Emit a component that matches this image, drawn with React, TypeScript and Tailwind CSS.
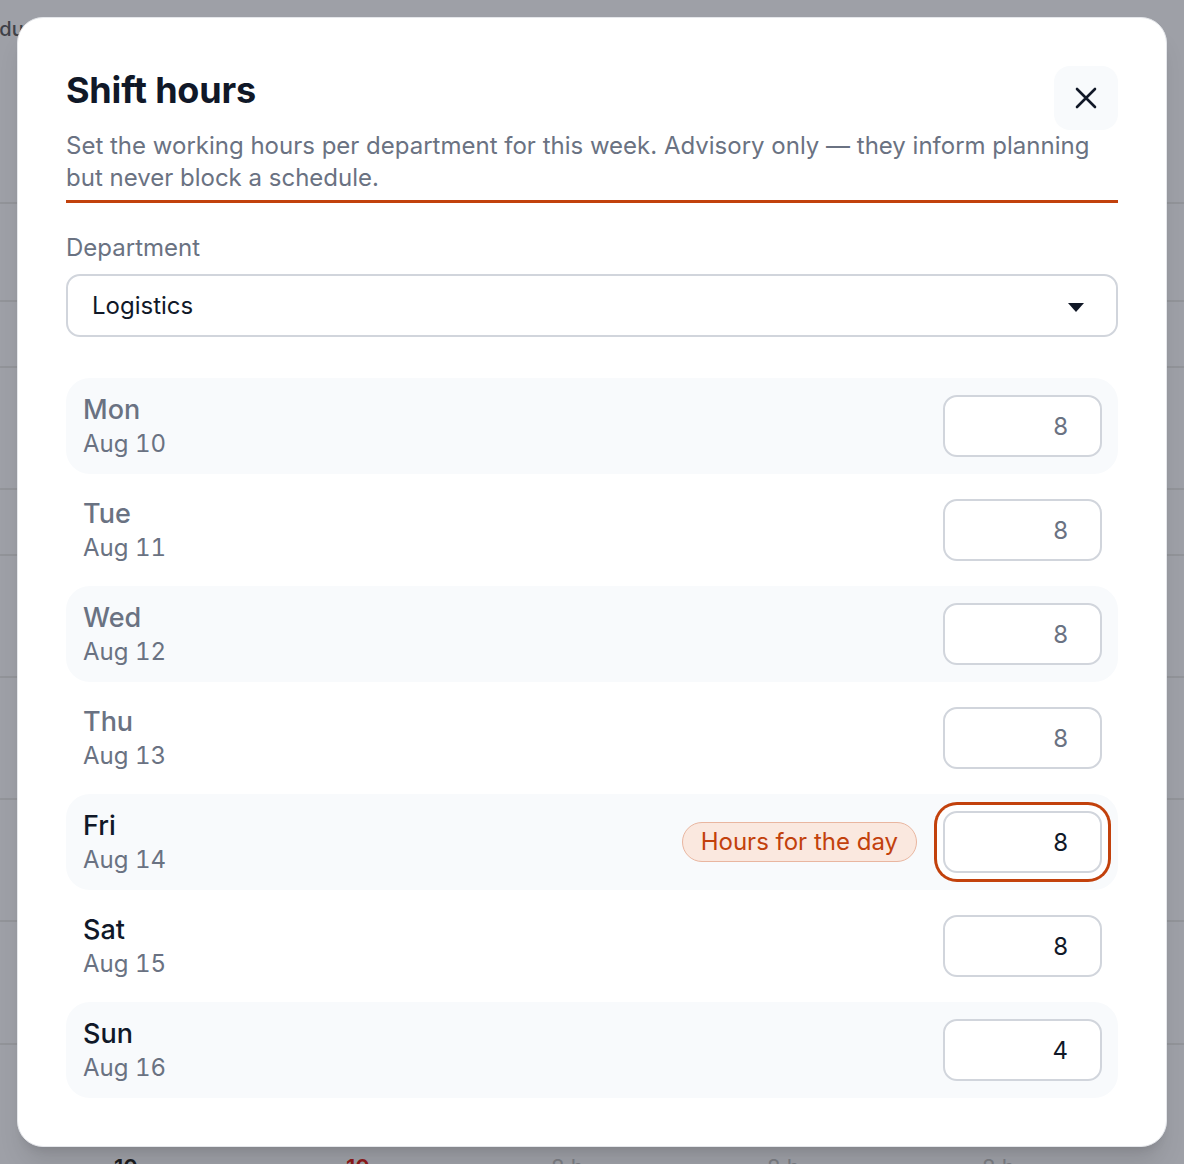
import { useState } from "react";

interface DayRow {
  day: string;
  date: string;
  hours: string;
  past: boolean;
}

const DAYS: DayRow[] = [
  { day: "Mon", date: "Aug 10", hours: "8", past: true },
  { day: "Tue", date: "Aug 11", hours: "8", past: true },
  { day: "Wed", date: "Aug 12", hours: "8", past: true },
  { day: "Thu", date: "Aug 13", hours: "8", past: true },
  { day: "Fri", date: "Aug 14", hours: "8", past: false },
  { day: "Sat", date: "Aug 15", hours: "8", past: false },
  { day: "Sun", date: "Aug 16", hours: "4", past: false },
];

// the dimmed table behind the overlay
function Backdrop() {
  return (
    <div className="absolute inset-0 flex flex-col bg-[#9ea0a7]">
      <div className="h-[204px] shrink-0 border-b-2 border-[#929499] pt-[14px]">
        <span className="ml-[-33px] text-[20px] font-medium text-[#3f4147]">Product</span>
      </div>
      <div className="h-[98px] shrink-0 border-b-2 border-[#929499]" />
      <div className="h-[66px] shrink-0 border-b-2 border-[#929499]" />
      <div className="h-[122px] shrink-0 border-b-2 border-[#929499]" />
      <div className="h-[66px] shrink-0 border-b-2 border-[#929499]" />
      <div className="h-[122px] shrink-0 border-b-2 border-[#929499]" />
      <div className="h-[122px] shrink-0 border-b-2 border-[#929499]" />
      <div className="h-[122px] shrink-0 border-b-2 border-[#929499]" />
      <div className="h-[123px] shrink-0 border-b-2 border-[#929499]" />
      <div className="flex shrink-0 pl-[114px] pt-[106px] text-[22px] font-semibold">
        <span className="w-[232px] text-[#1b1c20]">10</span>
        <span className="w-[205px] text-[#8e1a1a]">10</span>
        <span className="w-[216px] font-normal text-[#7b7d83]">8 h</span>
        <span className="w-[215px] font-normal text-[#7b7d83]">8 h</span>
        <span className="font-normal text-[#7b7d83]">8 h</span>
      </div>
    </div>
  );
}

export default function App() {
  const [hours, setHours] = useState(DAYS.map((d) => d.hours));
  const [dept, setDept] = useState("Logistics");

  return (
    <div className="relative h-[1164px] w-[1184px] overflow-hidden font-['Inter',sans-serif]">
      <Backdrop />

      <div className="absolute left-[17px] top-[17px] h-[1130px] w-[1150px] rounded-[26px] border border-gray-200 bg-white p-12 shadow-xl">
        {/* header */}
        <div className="border-b-[3px] border-[#c2410c] pb-[6px]">
          <div className="flex items-start justify-between">
            <h2 className="pt-[2px] text-[36px] font-bold leading-[44px] tracking-[-0.2px] text-gray-900">Shift hours</h2>
            <button className="flex h-16 w-16 items-center justify-center rounded-2xl bg-[#f8fafc]">
              <svg width="22" height="22" viewBox="0 0 22 22" fill="none" stroke="#111827" strokeWidth="2.6" strokeLinecap="round">
                <path d="M2 2L20 20M20 2L2 20" />
              </svg>
            </button>
          </div>
          <p className="text-[24px] leading-[32px] text-gray-500">
            Set the working hours per department for this week. Advisory only — they inform planning but never block a schedule.
          </p>
        </div>

        {/* department */}
        <div className="mt-[29px]">
          <label className="block text-[24px] leading-[32px] text-gray-500">Department</label>
          <div className="relative mt-[10px]">
            <select
              value={dept}
              onChange={(e) => setDept(e.target.value)}
              className="h-[63px] w-full appearance-none rounded-[14px] border-2 border-gray-300 bg-white px-6 text-[24px] text-gray-900 outline-none"
            >
              <option>Logistics</option>
              <option>Warehouse</option>
              <option>Front office</option>
            </select>
            <svg className="pointer-events-none absolute right-[34px] top-[29px]" width="16" height="9" viewBox="0 0 16 9">
              <path d="M0 0H16L8 9Z" fill="#111827" />
            </svg>
          </div>
        </div>

        {/* days */}
        <div className="mt-[41px] flex flex-col gap-2">
          {DAYS.map((d, i) => {
            const focused = d.day === "Fri";
            return (
              <div
                key={d.day}
                className={`flex h-24 items-center rounded-3xl px-4 ${i % 2 === 0 ? "bg-[#f8fafc]" : "bg-white"}`}
              >
                <div className="flex-1 pl-[1px]">
                  <div className={`text-[27px] font-medium leading-[36px] ${d.past ? "text-gray-500" : "text-gray-900"}`}>{d.day}</div>
                  <div className="text-[24px] leading-[32px] tabular-nums text-gray-500">{d.date}</div>
                </div>
                <div className="flex items-center gap-[26px]">
                  {focused && (
                    <span className="rounded-full border border-[#e9b6a0] bg-[#fae8df] px-[18px] text-[24px] leading-[38px] text-[#c2410c]">
                      Hours for the day
                    </span>
                  )}
                  <input
                    value={hours[i]}
                    onChange={(e) => setHours(hours.map((h, j) => (j === i ? e.target.value : h)))}
                    className={`h-[62px] w-[159px] shrink-0 rounded-[14px] border-2 border-gray-300 bg-white pr-8 text-right text-[24px] outline-none ${
                      d.past ? "text-gray-500" : "text-gray-900"
                    } ${focused ? "ring-[3px] ring-[#c2410c] ring-offset-[6px] ring-offset-white" : ""}`}
                  />
                </div>
              </div>
            );
          })}
        </div>
      </div>
    </div>
  );
}
